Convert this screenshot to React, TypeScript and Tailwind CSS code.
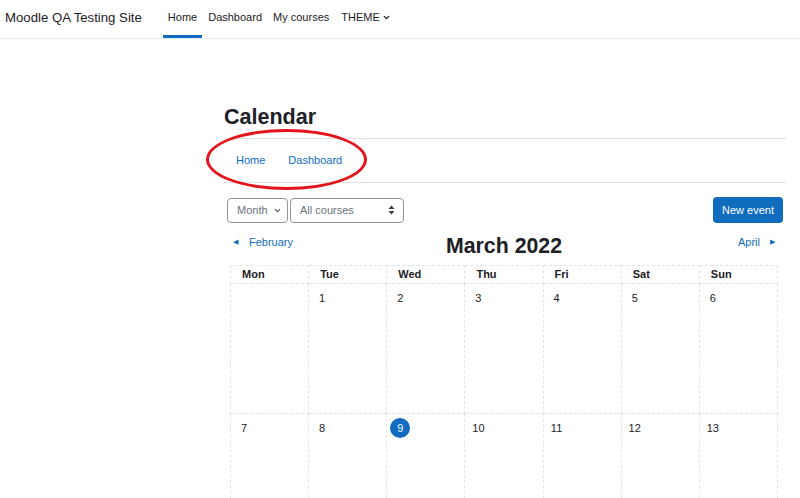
import React from 'react';
import { ChevronDown } from 'lucide-react';

const DAYS = ['Mon', 'Tue', 'Wed', 'Thu', 'Fri', 'Sat', 'Sun'];

// March 2022 starts on a Tuesday
const WEEKS: (number | null)[][] = [
  [null, 1, 2, 3, 4, 5, 6],
  [7, 8, 9, 10, 11, 12, 13],
];

const TODAY = 9;

const SortArrows = () => (
  <svg width="7" height="10" viewBox="0 0 7 10" className="text-[#343a40]">
    <path d="M3.5 0.5 L6.5 4 L0.5 4 Z" fill="currentColor" />
    <path d="M3.5 9.5 L6.5 6 L0.5 6 Z" fill="currentColor" />
  </svg>
);

const DayCell: React.FC<{ day: number | null }> = ({ day }) => (
  <td className="border border-dashed border-[#e3e6e9] align-top pt-[1px] pl-[3px] h-[130px]">
    {day !== null && (
      <span
        className={`inline-flex items-center justify-center w-[20px] h-[20px] rounded-full text-[11px] ${
          day === TODAY ? 'bg-[#0f6cbf] text-white' : 'text-[#1d2125]'
        }`}
      >
        {day}
      </span>
    )}
  </td>
);

export default function App() {
  return (
    <div className="relative w-[800px] h-[498px] overflow-hidden bg-white text-[#1d2125]" style={{ fontFamily: '"Liberation Sans", Arial, sans-serif' }}>
      {/* Navbar */}
      <nav className="h-[39px] flex items-stretch border-b border-[#e9ecef]">
        <div className="flex items-center pb-[3px] pl-[5px] pr-[21px] text-[13.2px] text-[#1d2125]">Moodle QA Testing Site</div>
        <div className="flex items-stretch text-[11px]">
          <a className="flex items-center px-[5px] mr-[1px] border-b-[3px] border-[#0f6cbf] text-[#1d2125]">Home</a>
          <a className="flex items-center pb-[3px] px-[5px] text-[#1d2125]">Dashboard</a>
          <a className="flex items-center pb-[3px] px-[6px] text-[#1d2125]">My courses</a>
          <a className="flex items-center pb-[3px] gap-[2px] px-[6px] text-[#1d2125]">
            THEME <ChevronDown size={9} strokeWidth={3.5} />
          </a>
        </div>
      </nav>

      {/* Main */}
      <main className="ml-[224px] w-[562px]">
        <h2 className="mt-[65px] pb-[8px] text-[21.5px] leading-[26px] font-bold text-[#1d2125] border-b border-[#dee2e6]">
          Calendar
        </h2>

        <div className="h-[44px] flex items-center gap-[23px] pl-[12px] text-[11px] text-[#0f6cbf] border-b border-[#dee2e6]">
          <a>Home</a>
          <a>Dashboard</a>
        </div>

        <div className="mt-[14px] px-[3px] flex items-center justify-between">
          <div className="flex items-center gap-[2px]">
            <div className="h-[25px] w-[61px] flex items-center gap-[5px] pl-[9px] border border-[#8f959e] rounded-[4px] text-[11px] text-[#6a737b]">
              Month <ChevronDown size={9} strokeWidth={3} className="text-[#495057]" />
            </div>
            <div className="h-[25px] w-[114px] flex items-center justify-between pl-[9px] pr-[8px] border border-[#8f959e] rounded-[4px] text-[11px] text-[#6a737b]">
              All courses <SortArrows />
            </div>
          </div>
          <button className="h-[26px] px-[9px] bg-[#0f6cbf] text-white text-[11px] rounded-[4px]">New event</button>
        </div>

        <div className="mt-[10px] ml-[6px] w-[548px]">
          <div className="flex items-start justify-between px-[3px]">
            <a className="w-[120px] flex items-center gap-[11px] pt-[1px] text-[11px] text-[#0f6cbf]">
              <span className="text-[7px]">◀</span>February
            </a>
            <h3 className="text-[21.3px] leading-[26px] font-bold text-[#1d2125]">March 2022</h3>
            <a className="w-[120px] flex items-center justify-end gap-[10px] pt-[1px] text-[11px] text-[#0f6cbf]">
              April<span className="text-[7px]">▶</span>
            </a>
          </div>

          <table className="mt-[6px] w-[548px] table-fixed border-collapse">
            <thead>
              <tr>
                {DAYS.map((d) => (
                  <th key={d} className="h-[18px] border border-dashed border-[#e3e6e9] pl-[11px] text-left text-[11px] font-bold text-[#1d2125]">
                    {d}
                  </th>
                ))}
              </tr>
            </thead>
            <tbody>
              {WEEKS.map((week, i) => (
                <tr key={i}>
                  {week.map((day, j) => (
                    <DayCell key={j} day={day} />
                  ))}
                </tr>
              ))}
            </tbody>
          </table>
        </div>
      </main>

      {/* Red annotation ellipse */}
      <div className="absolute left-[206px] top-[129px] w-[161px] h-[61px] rounded-[50%] border-[3px] border-[#e3141c] pointer-events-none" />
    </div>
  );
}
